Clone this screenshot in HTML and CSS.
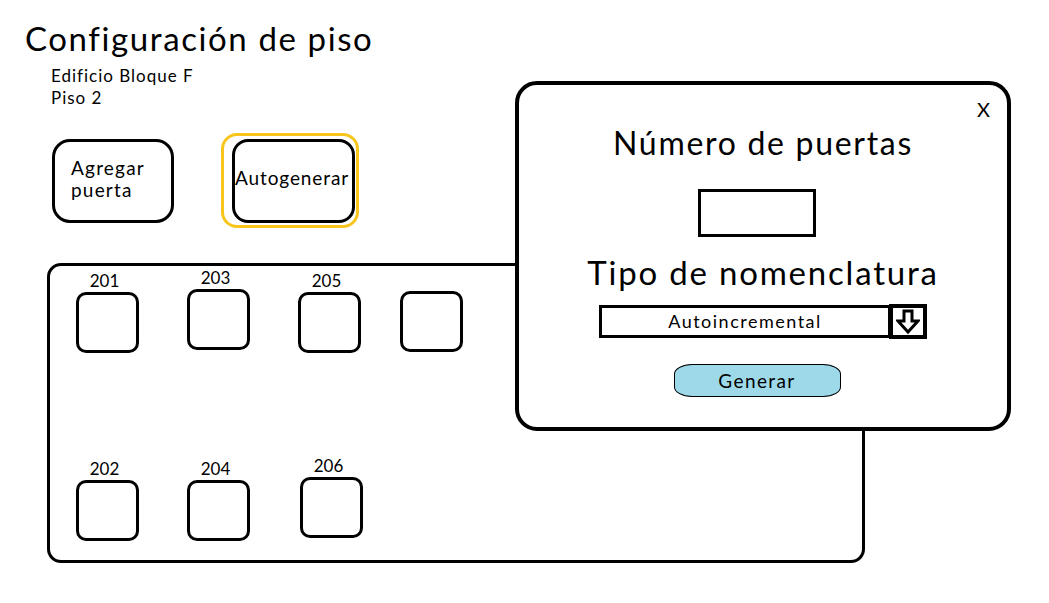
FILE: index.html
```html
<!DOCTYPE html>
<html lang="es">
<head>
<meta charset="utf-8">
<title>Configuración de piso</title>
<link rel="stylesheet" href="styles.css">
</head>
<body>
<div class="page">
  <h1 class="title">Configuración de piso</h1>
  <div class="meta">
    <div>Edificio Bloque F</div>
    <div>Piso 2</div>
  </div>
  <div class="actions">
    <button class="btn btn-add">Agregar<br>puerta</button>
    <div class="focus-ring"><button class="btn btn-auto">Autogenerar</button></div>
  </div>
  <div class="panel">
    <div class="row">
      <div class="door"><span class="num">201</span><div class="box"></div></div>
      <div class="door up"><span class="num">203</span><div class="box"></div></div>
      <div class="door"><span class="num">205</span><div class="box"></div></div>
      <div class="door fourth"><span class="num"></span><div class="box"></div></div>
    </div>
    <div class="row row2">
      <div class="door"><span class="num">202</span><div class="box"></div></div>
      <div class="door"><span class="num">204</span><div class="box"></div></div>
      <div class="door up sixth"><span class="num">206</span><div class="box"></div></div>
    </div>
  </div>

  <div class="modal">
    <span class="close">X</span>
    <h2 class="m-title">Número de puertas</h2>
    <div class="num-input"></div>
    <h2 class="m-title m-title2">Tipo de nomenclatura</h2>
    <div class="select">
      <div class="select-value">Autoincremental</div>
      <div class="select-arrow">
        <svg width="24" height="26" viewBox="0 0 24 26"><polygon points="8,2 16,2 16,12 22,12 12,23 2,12 8,12" fill="#fff" stroke="#000" stroke-width="3" stroke-linejoin="miter"/></svg>
      </div>
    </div>
    <button class="generate">Generar</button>
  </div>
</div>
</body>
</html>
```
FILE: styles.css
```css
* { box-sizing: border-box; }
body {
  margin: 0;
  background: #fff;
  color: #000;
  font-family: Lato, "Open Sans", sans-serif;
}
.page {
  position: relative;
  width: 1049px;
  height: 603px;
  padding: 18px 0 0 25px;
}
.title {
  margin: 0;
  font-weight: 400;
  font-size: 33px;
  line-height: 40px;
  letter-spacing: 1.6px;
}
.meta {
  margin: 7px 0 0 26px;
  font-size: 17px;
  line-height: 22px;
  letter-spacing: 1px;
}
.actions {
  display: flex;
  align-items: flex-start;
  margin: 22px 0 0 27px;
}
.btn {
  font-family: inherit;
  font-size: 19px;
  letter-spacing: 1.2px;
  background: #fff;
  color: #000;
  border: 3px solid #000;
  border-radius: 18px;
  cursor: pointer;
}
.btn-add {
  width: 122px;
  height: 84px;
  margin-top: 8px;
  text-align: left;
  padding: 0 0 4px 16px;
  line-height: 22px;
}
.focus-ring {
  margin-left: 47px;
  margin-top: 2px;
  width: 138px;
  height: 95px;
  border: 3px solid #f7c51b;
  border-radius: 16px;
  padding: 3px 2px 2px 8px;
}
.btn-auto {
  width: 123px;
  height: 84px;
  padding: 0 0 8px 0;
  text-align: left;
  white-space: nowrap;
  border-radius: 16px;
  overflow: visible;
  letter-spacing: 0.9px;
}
.panel {
  margin: 35px 0 0 22px;
  width: 818px;
  height: 300px;
  border: 3px solid #000;
  border-radius: 14px;
  padding: 4px 0 0 26px;
}
.row {
  display: flex;
  gap: 48px;
}
.row2 { margin-top: 105px; }
.door {
  display: flex;
  flex-direction: column;
  align-items: center;
  width: 63px;
}
.door.up { margin-top: -3px; }
.door.fourth { margin-left: -9px; margin-top: -1px; }
.door.sixth { margin-left: 2px; }
.num {
  font-size: 17px;
  line-height: 22px;
  height: 22px;
  margin-left: -6px;
}
.box {
  width: 63px;
  height: 61px;
  border: 3px solid #000;
  border-radius: 10px;
}
.modal {
  position: absolute;
  left: 515px;
  top: 81px;
  width: 496px;
  height: 350px;
  background: #fff;
  border: 4px solid #000;
  border-radius: 22px;
  display: flex;
  flex-direction: column;
  align-items: center;
  padding-top: 40px;
}
.close {
  position: absolute;
  right: 17px;
  top: 14px;
  font-size: 20px;
  line-height: 20px;
}
.m-title {
  margin: 0;
  font-weight: 400;
  font-size: 32px;
  line-height: 36px;
  letter-spacing: 1.7px;
}
.num-input {
  width: 118px;
  height: 48px;
  border: 3px solid #000;
  margin: 28px 0 0 -12px;
}
.m-title2 {
  margin-top: 17px;
  font-size: 33px;
  letter-spacing: 1.8px;
}
.select {
  display: flex;
  margin: 14px 0 0 0;
  align-items: center;
}
.select-value {
  width: 292px;
  height: 33px;
  border: 3px solid #000;
  text-align: center;
  font-size: 18px;
  line-height: 27px;
  letter-spacing: 1.5px;
}
.select-arrow {
  width: 38px;
  height: 35px;
  margin-left: -2px;
  border: 4px solid #000;
  display: flex;
  align-items: center;
  justify-content: center;
}
.generate {
  margin: 25px 0 0 -12px;
  width: 167px;
  height: 33px;
  background: #9ed9ea;
  border: 1px solid #000;
  border-radius: 18px / 10px;
  font-family: inherit;
  font-size: 19px;
  letter-spacing: 1.4px;
  color: #000;
  padding: 0;
}
```
